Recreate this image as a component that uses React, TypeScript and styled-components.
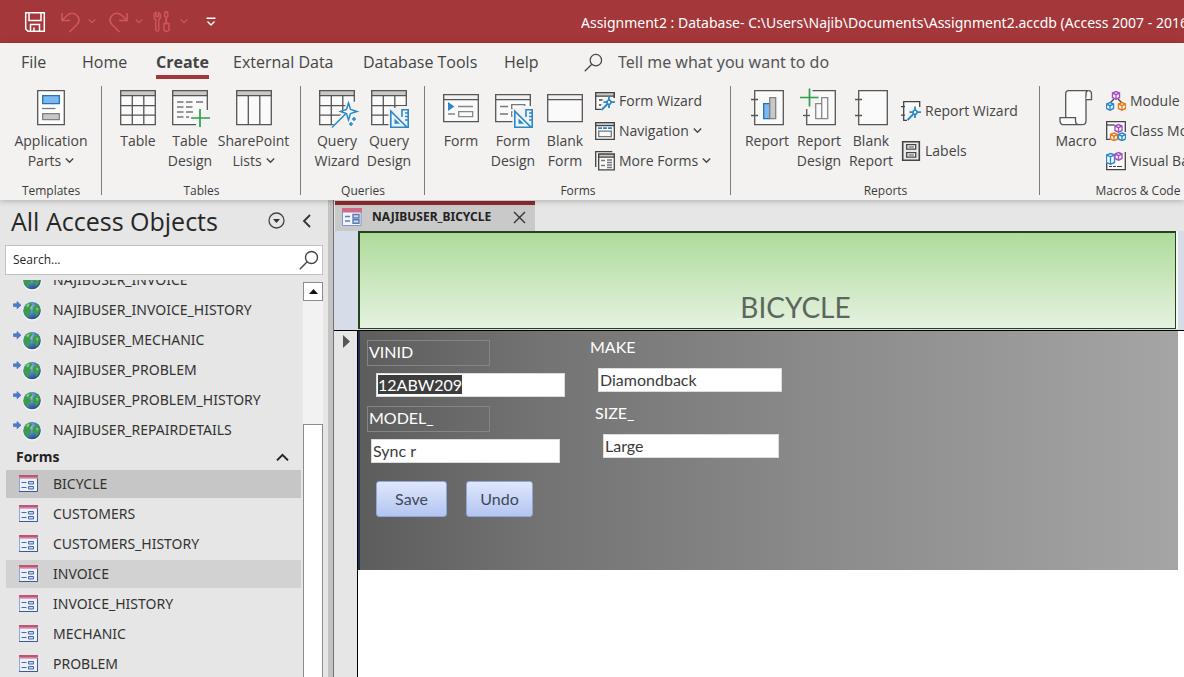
import React from 'react';
import styled, { createGlobalStyle } from 'styled-components';

const ui = '"Open Sans", "Noto Sans", sans-serif';
const wide = '"Noto Sans", "Open Sans", sans-serif';
const formFont = 'Lato, "Open Sans", sans-serif';
const ink = '#444';
const blue = '#2b88c8';
const green = '#2fa04a';
const purple = '#a64dc4';
const orange = '#e8791c';

const Global = createGlobalStyle`
  * { box-sizing: border-box; }
  body { margin: 0; overflow: hidden; font-family: ${ui}; color: ${ink}; background: #e6e6e6; }
  button { font: inherit; color: inherit; background: none; border: 0; padding: 0; }
  svg { display: block; flex: none; }
  ul { list-style: none; margin: 0; padding: 0; }
`;

const Shell = styled.div`
  height: 100vh;
  display: flex;
  flex-direction: column;
  overflow: hidden;
`;

/* Title bar */
const TitleBar = styled.header`
  height: 43px;
  flex: none;
  background: #a4373a;
  color: #fff;
  display: flex;
  align-items: center;
  justify-content: space-between;
  padding-left: 24px;
  overflow: hidden;
`;
const QuickAccess = styled.div`
  display: flex;
  align-items: center;
  flex: none;
`;
const QuickButton = styled.button<{ $dim?: boolean; $gap?: number }>`
  color: ${p => (p.$dim ? '#d0575b' : '#fff')};
  margin-right: ${p => p.$gap ?? 0}px;
`;
const Title = styled.div`
  flex: 0 0 603px;
  min-width: 0;
  overflow: hidden;
  padding-top: 2px;
  font: 14px/20px ${wide};
  white-space: nowrap;
`;

/* Ribbon */
const RibbonBox = styled.section`
  flex: none;
  background: #f3f2f1;
  box-shadow: 0 1px 6px rgba(0, 0, 0, 0.25);
  position: relative;
  z-index: 1;
`;
const Tabs = styled.nav`
  height: 43px;
  display: flex;
  align-items: flex-start;
  padding: 8px 0 0 21px;
`;
const Tab = styled.button<{ $active?: boolean; $w: number }>`
  width: ${p => p.$w}px;
  flex: none;
  text-align: left;
  font-size: 16px;
  line-height: 22px;
  white-space: nowrap;
  font-weight: ${p => (p.$active ? 700 : 400)};
  span {
    display: inline-block;
    padding-bottom: 2px;
    border-bottom: 4px solid ${p => (p.$active ? '#a4373a' : 'transparent')};
  }
`;
const Tell = styled.label`
  display: flex;
  align-items: center;
  gap: 15px;
  height: 22px;
  flex: 1;
  input {
    flex: 1;
    border: 0;
    padding: 0;
    background: none;
    font: 16px/22px ${wide};
    color: #555;
  }
  input::placeholder { color: #555; opacity: 1; }
`;
const Groups = styled.div`
  display: flex;
  height: 114px;
  padding-bottom: 5px;
  overflow: hidden;
`;
const Group = styled.section`
  flex: none;
  display: flex;
  flex-direction: column;
  justify-content: space-between;
  padding: 0 9px 0 10px;
  border-right: 1px solid #7c7c7c;
  &:last-child { border: 0; }
`;
const GroupTools = styled.div`
  display: flex;
`;
const GroupName = styled.div`
  text-align: center;
  font-size: 12px;
  line-height: 16px;
  height: 12px;
  color: #3b3b3b;
  white-space: nowrap;
`;
const BigButton = styled.button<{ $w?: number }>`
  width: ${p => p.$w ?? 52}px;
  display: flex;
  flex-direction: column;
  align-items: center;
  justify-content: flex-start;
  padding-top: 2px;
  font-size: 14px;
  line-height: 20px;
`;
const BigLabel = styled.span`
  margin-top: 3px;
  display: flex;
  flex-direction: column;
  align-items: center;
  white-space: nowrap;
`;
const Line = styled.span`
  display: flex;
  align-items: center;
  gap: 4px;
`;
const SmallTools = styled.div<{ $w: number; $spread?: boolean }>`
  width: ${p => p.$w}px;
  margin-left: 4px;
  padding-top: ${p => (p.$spread ? 10 : 0)}px;
  display: flex;
  flex-direction: column;
  gap: ${p => (p.$spread ? 10 : 0)}px;
`;
const SmallButton = styled.button`
  height: 30px;
  display: flex;
  align-items: center;
  gap: 4px;
  font-size: 14px;
  line-height: 20px;
  white-space: nowrap;
`;

/* Work area */
const Work = styled.div`
  flex: 1;
  min-height: 0;
  display: flex;
`;
const NavPane = styled.aside`
  flex: 0 0 334px;
  display: flex;
  flex-direction: column;
  background: #e6e6e6;
  border-right: 1px solid #707070;
  box-shadow: inset -5px 0 0 #c3c3c3;
  min-height: 0;
`;
const NavHead = styled.div`
  height: 45px;
  flex: none;
  display: flex;
  align-items: center;
  padding: 0 22px 4px 11px;
  gap: 17px;
  h1 {
    flex: 1;
    margin: 0;
    font-size: 25px;
    line-height: 34px;
    font-weight: 400;
    color: #262626;
    white-space: nowrap;
  }
`;
const SearchBox = styled.label`
  height: 30px;
  flex: none;
  margin: 0 10px 0 5px;
  padding: 0 3px 0 7px;
  display: flex;
  align-items: center;
  background: #fff;
  border: 1px solid #c0c0c0;
  input {
    flex: 1;
    min-width: 0;
    border: 0;
    padding: 0;
    font: 12px/20px ${ui};
  }
  input::placeholder { color: #262626; opacity: 1; }
`;
const NavBody = styled.div`
  flex: 1;
  min-height: 0;
  margin: 5px 10px 0 6px;
  display: flex;
  justify-content: space-between;
  gap: 2px;
`;
const NavScroll = styled.div`
  flex: 1;
  overflow: hidden;
  display: flex;
  flex-direction: column;
  justify-content: flex-start;
`;
const NavList = styled.ul<{ $scrolled?: boolean }>`
  flex: none;
  display: flex;
  flex-direction: column;
  gap: 2px;
  margin-top: ${p => (p.$scrolled ? -14 : 0)}px;
`;
const NavItem = styled.li<{ $bg?: string }>`
  height: 28px;
  background: ${p => p.$bg ?? 'transparent'};
  button {
    width: 100%;
    height: 100%;
    display: flex;
    align-items: center;
    padding-left: 6px;
    gap: 10px;
    font: 14px/20px ${wide};
    color: #333;
    white-space: nowrap;
  }
`;
const NavSection = styled.button`
  flex: none;
  height: 26px;
  display: flex;
  align-items: center;
  justify-content: space-between;
  padding: 0 12px 0 10px;
  font-size: 14px;
  line-height: 20px;
  font-weight: 700;
  color: #222;
`;
const ScrollBar = styled.div`
  width: 20px;
  margin-top: 2px;
  display: flex;
  flex-direction: column;
  background: #f2f2f2;
`;
const ScrollUp = styled.button`
  height: 19px;
  flex: none;
  display: flex;
  align-items: center;
  justify-content: center;
  background: #fff;
  border: 1px solid #8c8c8c;
`;
const ScrollThumb = styled.div`
  flex: 1;
  margin-top: 123px;
  background: #fff;
  border: 1px solid #8c8c8c;
  border-bottom: 0;
`;

const Doc = styled.main`
  flex: 1;
  min-width: 0;
  display: flex;
  flex-direction: column;
`;
const DocTabs = styled.div`
  flex: none;
  height: 31px;
  display: flex;
  padding: 1px 0 0 1px;
`;
const DocTab = styled.div`
  width: 200px;
  display: flex;
  align-items: center;
  padding: 0 9px 2px 7px;
  background: #c9c9c9;
  border-top: 4px solid #8e2a2f;
  b {
    flex: 1;
    margin-left: 10px;
    font: 700 12px/20px ${wide};
    color: #222;
    white-space: nowrap;
  }
`;
const HeaderRow = styled.div`
  flex: none;
  display: flex;
  height: 100px;
  background: #d6dde8;
  border-bottom: 1px solid #000;
  padding: 0 8px 1px 24px;
`;
const FormHeader = styled.div`
  flex: 1;
  display: flex;
  justify-content: center;
  align-items: flex-end;
  padding: 0 0 3px 56px;
  background: linear-gradient(#aedb9b, #e6f2e0);
  border: solid #26421f;
  border-width: 2px 1px 1px 2px;
  box-shadow: 2px 0 0 #f6f8f6;
  h2 {
    margin: 0;
    font: 400 28px/36px ${formFont};
    color: #5c665c;
  }
`;
const Detail = styled.div`
  flex: 1;
  min-height: 0;
  display: flex;
  background: #fff;
`;
const RecordSelector = styled.div`
  width: 24px;
  flex: none;
  padding: 4px 0 0 9px;
  background: #e6e6e6;
  border-right: 1px solid #000;
`;
const RecordForm = styled.form`
  flex: 1;
  height: 239px;
  margin-right: 6px;
  display: flex;
  align-items: flex-start;
  padding: 4px 0 0 7px;
  gap: 23px;
  border-left: 2px solid #1f2f50;
  background: linear-gradient(90deg, #5d5d5d, #737373 22%, #8a8a8a 55%, #a5a5a5);
`;
const FormColumn = styled.div<{ $raised?: boolean }>`
  display: flex;
  flex-direction: column;
  gap: 9px;
  margin-top: ${p => (p.$raised ? 0 : 5)}px;
`;
const Field = styled.div<{ $inset: number; $labelInset?: number; $w: number; $framed?: boolean }>`
  display: flex;
  flex-direction: column;
  gap: 7px;
  label {
    width: 123px;
    height: 26px;
    margin-left: ${p => p.$labelInset ?? 0}px;
    padding-left: 1px;
    border: 1px solid ${p => (p.$framed ? '#858585' : 'transparent')};
    font: 16px/22px ${formFont};
    color: #fff;
  }
  input {
    width: ${p => p.$w}px;
    height: 24px;
    margin-left: ${p => p.$inset}px;
    padding: 0 1px 2px;
    border: 1px solid #ddd;
    border-radius: 0;
    outline: 0;
    background: #fff;
    font: 16px/20px ${formFont};
    color: #3b3b3b;
  }
  input::selection { background: #3d3d3d; color: #fff; }
`;
const Actions = styled.div`
  display: flex;
  gap: 19px;
  padding: 9px 0 0 9px;
`;
const Action = styled.button<{ $w: number }>`
  width: ${p => p.$w}px;
  height: 36px;
  border: 1px solid #8ea6d8;
  border-radius: 3px;
  background: linear-gradient(#dfe7fb, #b3c5f2);
  font: 16px/20px ${formFont};
  color: #404858;
`;

/* Icons */
const Chevron = ({ up = false, s = 9 }: { up?: boolean; s?: number }) => (
  <svg width={s} height={s} viewBox="0 0 9 9" fill="none" stroke="currentColor" strokeWidth="1.4">
    <path d={up ? 'M.7 6.5 4.5 2.7 8.3 6.5' : 'M.8 1.6 4.5 5.2 8.2 1.6'} />
  </svg>
);

const Magnifier = ({ size = 20, flip = false }: { size?: number; flip?: boolean }) => (
  <svg width={size} height={size} viewBox="0 0 20 20" fill="none" stroke="#444" strokeWidth={flip ? 1.4 : 1.3}>
    <circle cx="12.5" cy="7.5" r="6" />
    <path d="M8.2 11.8.8 19.2" />
  </svg>
);

const Svg36 = ({ children }: { children: React.ReactNode }) => (
  <svg width="36" height="40" viewBox="0 0 36 40" fill="none" stroke="#555" strokeWidth="1.3" overflow="visible">{children}</svg>
);

const Grid = () => (
  <>
    <path d="M.7 2.7h34.6v34H.7z" fill="#fafafa" />
    <path d="M.7 2.7h34.6v5H.7z" fill="#c8c8c8" />
    <path d="M.7 17.7h34.6M.7 27.2h34.6M12.3 7.7v29M23.8 7.7v29" />
  </>
);
const SetSquare = ({ y = 0 }: { y?: number }) => (
  <g transform={`translate(19 ${y})`}>
    <path d="M-1.5-1h9v-2h12v25h-21z" fill="#f3f2f1" stroke="none" />
    <path d="M12 8V.8h6.200v17.500H12" fill="#eef6fc" stroke={blue} strokeWidth="1.600" />
    <path d="M.8 2.200v16.100H17L.8 2.200z" fill="#eef6fc" stroke={blue} strokeWidth="1.600" />
    <path d="M15 4h3M15 7.500h3M15 11h3" stroke={blue} />
    <path d="M4.500 9.500v5.200H10z" fill={blue} stroke="none" />
  </g>
);
const FormWindow = () => (
  <>
    <path d="M.7 6.7h34.6v27H.7z" fill="#fafafa" />
    <path d="M.7 6.7h34.6v5H.7z" fill="#f1f1f1" />
  </>
);

const icons = {
  parts: (
    <Svg36>
      <path d="M4.700 2.700h26.600v34H4.700z" fill="#fff" />
      <path d="M9.700 7.700h16.600v8H9.700z" fill="#7db8ee" stroke="#1e74bd" />
      <path d="M9 20.500h13.500" stroke="#777" />
      <path d="M9.700 25.700h16.600v6H9.700z" fill="#c8c8c8" stroke="#808080" />
    </Svg36>
  ),
  table: <Svg36><Grid /></Svg36>,
  tableDesign: (
    <Svg36>
      <path d="M.7 2.700h34.600v34H.7z" fill="#fafafa" />
      <path d="M.7 2.700h34.600v5H.7z" fill="#c8c8c8" />
      <path d="M5 14h6.500M14 14h6.500M24 14h7M5 19h6.500M14 19h6.500M5 24h6.500M14 24h7M5 29h6.500M14 29h3" stroke="#777" />
      <path d="M26 22h11v18H24v-7h-4v-6h6z" fill="#f3f2f1" stroke="none" />
      <path d="M28 21v18M19 30h19" stroke={green} strokeWidth="1.700" />
    </Svg36>
  ),
  lists: (
    <Svg36>
      <path d="M.7 2.700h34.600v34H.7z" fill="#fafafa" />
      <path d="M.7 2.700h34.600v5H.7z" fill="#c8c8c8" />
      <path d="M12.300 7.700v29M23.800 7.700v29" />
    </Svg36>
  ),
  queryWizard: (
    <Svg36>
      <Grid />
      <path d="M38 13v27H12l11-15 4-9z" fill="#f3f2f1" stroke="none" />
      <path d="m29.500 15 2 6.500 6.500 2-6.500 2-2 6.500-2-6.500-6-2 6-2z" fill="#f8fcff" stroke={blue} strokeWidth="1.500" />
      <path d="M26.500 26 13 39.500M35 29v4M33 31h4M32 34v4M30 36h4" stroke={blue} strokeWidth="1.500" />
    </Svg36>
  ),
  queryDesign: <Svg36><Grid /><SetSquare y={21} /></Svg36>,
  form: (
    <Svg36>
      <FormWindow />
      <path d="M5 14v9l6.500-4.500z" fill={blue} stroke="none" />
      <path d="M15 18.500h15M5 26h7" stroke="#888" />
      <path d="M15.700 23.700h14v5h-14z" stroke="#888" />
    </Svg36>
  ),
  formDesign: (
    <Svg36>
      <FormWindow />
      <path d="M5 18.500h8M5 26h8" stroke="#777" />
      <path d="M16.700 16.700h13v4h-13zM16.700 24h5v4h-5z" stroke="#777" />
      <SetSquare y={21} />
    </Svg36>
  ),
  blankForm: <Svg36><FormWindow /></Svg36>,
  report: (
    <Svg36>
      <path d="M5.700 2.700h28.600v34H5.700z" fill="#fafafa" />
      <path d="M2 11.500h7M2 27.500h7" />
      <path d="M14.700 15.700h6v15h-6z" fill="#7db8ee" stroke="#1e74bd" />
      <path d="M20.700 9.700h6v21h-6z" fill="#c8c8c8" stroke="#808080" />
    </Svg36>
  ),
  reportDesign: (
    <Svg36>
      <path d="M5.700 2.700h28.600v34H5.700z" fill="#fafafa" />
      <path d="M2 27.500h7" />
      <path d="M14.700 15.700h6v15h-6zM20.700 9.700h6v21h-6z" stroke="#888" />
      <path d="M-1 0h12.500v7H18v6h-4v8H-1z" fill="#f3f2f1" stroke="none" />
      <path d="M8.500.500v18M-1 9.500h18.500" stroke={green} strokeWidth="1.700" />
    </Svg36>
  ),
  blankReport: (
    <Svg36>
      <path d="M5.700 2.700h28.600v34H5.700z" fill="#fafafa" />
      <path d="M2 11.500h7M2 27.500h7" />
    </Svg36>
  ),
  macro: (
    <Svg36>
      <path d="M7.700 29V5.500q0-2.800 3-2.800h20q-2.700 0-2.700 3v27q0 4-4 4H6q-4 0-4-4v-3h15.500v3q0 4 4 4" fill="#fafafa" />
      <path d="M28 11.700h5.500V6q0-3.300-3-3.300" fill="#fafafa" />
    </Svg36>
  ),
};

const Svg20 = ({ children }: { children: React.ReactNode }) => (
  <svg width="20" height="20" viewBox="0 0 20 20" fill="none" stroke="#444" strokeWidth="1.3">{children}</svg>
);
const MiniWand = () => (
  <>
    <path d="M8 7h12v13H6v-5z" fill="#f3f2f1" stroke="none" />
    <path d="M14 5.500v4M14 13v4M8.500 11.200h4M15.500 11.200h4.500M13 12.500 6.500 19" stroke={blue} strokeWidth="1.800" />
    <circle cx="14" cy="11.200" r="2" fill="#fff" stroke={blue} strokeWidth="1.600" />
  </>
);
const Cube = ({ x, y, c }: { x: number; y: number; c: string }) => (
  <g transform={`translate(${x} ${y})`} stroke={c} strokeWidth="1.400">
    <path d="M4 .500 7.500 2v4.500L4 8.200.500 6.500V2z" fill="#fff" />
    <path d="M.5 2 4 3.700 7.500 2M4 3.700v4.500" />
  </g>
);
const small = {
  formWizard: (
    <Svg20>
      <path d="M.7 1.700h18.600v16.600H.7z" fill="#fafafa" />
      <path d="M.7 1.700h18.600v3.500H.7z" fill="#c8c8c8" />
      <path d="M4 9h4M4 14h3" />
      <MiniWand />
      <path d="M19.300 1.700v5" />
    </Svg20>
  ),
  navigation: (
    <Svg20>
      <path d="M.7 1.700h18.600v16.600H.7z" fill="#fafafa" />
      <path d="M.7 1.700h18.600v3H.7z" fill="#c8c8c8" />
      <path d="M3 7.200h14" stroke={blue} strokeDasharray="4 1" strokeWidth="1.800" />
      <path d="M3.700 10.200h12.600v5.500H3.700z" stroke="#777" />
    </Svg20>
  ),
  moreForms: (
    <Svg20>
      <path d="M.7 16V.7h16.600" />
      <path d="M3.700 3.200h15.600v15.600H3.700z" fill="#fafafa" />
      <path d="M3.700 3.200h15.600v3H3.700z" fill="#c8c8c8" />
      <path d="M6 9.500h4M6 14.500h4M12 9h5M12 11.500h5M12 14h5M12 16.500h5" stroke="#777" />
    </Svg20>
  ),
  reportWizard: (
    <Svg20>
      <path d="M18.700 6V.7H2.700v18.600h5" fill="#fafafa" />
      <path d="M0 5.700h4M0 14.200h4" />
      <MiniWand />
    </Svg20>
  ),
  labels: (
    <Svg20>
      <path d="M1.700.7h16.600v18.600H1.700z" fill="#e9e9e9" strokeWidth="1.600" />
      <path d="M5.700 3.700h9v4.500h-9zM5.700 11.700h9v4.500h-9z" fill="#fafafa" />
      <path d="M7.500 6h5.500M7.500 14h5.500" strokeWidth="1" />
    </Svg20>
  ),
  module: (
    <Svg20>
      <path d="M8 8 4 12M12 8l4 4" />
      <Cube x={6} y={0} c={purple} />
      <Cube x={0} y={11} c={blue} />
      <Cube x={12} y={11} c={orange} />
    </Svg20>
  ),
  classModule: (
    <Svg20>
      <path d="M.7.7h18.600v17.600H.7z" fill="#fafafa" />
      <path d="M.7 4h8" />
      <path d="M4 11h16v9H4z" fill="#f3f2f1" stroke="none" />
      <Cube x={8.5} y={3} c={purple} />
      <Cube x={4} y={11.5} c={orange} />
      <Cube x={12} y={11.5} c={blue} />
    </Svg20>
  ),
  visualBasic: (
    <Svg20>
      <path d="M.7 12v6.700h18.600V1" fill="#fafafa" />
      <path d="M3 15.500h3M7 15.500h3M11 15.500h5" strokeWidth="1" />
      <path d="M4.500 2.500 8.500 4v7.500l-4 1.800-4-1.800V4zM.500 4l4 1.800 4-1.800M4.500 5.800v7" stroke={blue} fill="#fff" strokeWidth="1.400" />
      <Cube x={8.5} y={1} c={purple} />
    </Svg20>
  ),
};

const Globe = () => (
  <svg width="31" height="26" viewBox="0 0 31 26">
    <defs>
      <radialGradient id="sea" cx=".35" cy=".3" r=".8">
        <stop offset="0" stopColor="#a9cdf0" />
        <stop offset=".5" stopColor="#4a80c2" />
        <stop offset="1" stopColor="#1d427c" />
      </radialGradient>
    </defs>
    <path d="M1.500 6.800H5V4.500l4 3.700-4 3.600V9.600H1.500z" fill="#4b7ad6" stroke="#3f62b0" strokeWidth=".6" />
    <circle cx="20" cy="14.200" r="9.600" fill="#f6f8f6" />
    <circle cx="20" cy="13.500" r="8.800" fill="url(#sea)" />
    <path d="M12.500 10q2-4 6-4.500l2 2-2.500 3.500 1.500 3-2 2.500-1 4q-4-2-5-6zM23 6q4 1.500 5 5.500l-1 5-3 3.500-1.500-4.500-2-1 .5-4.500 3-1.500z" fill="#3f9a4c" />
    <path d="M14 9q2-3 4-2.500l-2 4zM24 10.500l2.500 1-1.500 3z" fill="#8ad07c" />
  </svg>
);

const FormGlyph = () => (
  <svg width="31" height="20" viewBox="0 0 31 20">
    <path d="M7.500 2h18v15.500h-18z" fill="#eaf1fd" stroke="#8fa6d0" />
    <path d="M7 1h19v3.500H7z" fill="#bd5577" />
    <path d="M7 3.500h19v1H7z" fill="#e3b0c2" />
    <path d="M25.500 4.500V17.500H7" fill="none" stroke="#3f5a90" />
    <path d="M9.500 8.500h5M9.500 13.500h5" stroke="#4c69a3" />
    <path d="M16.500 7.500h5v2.500h-5zM16.500 12.500h5v2.500h-5z" fill="#c9d8f4" stroke="#4c69a3" />
  </svg>
);

const tables = ['NAJIBUSER_INVOICE', 'NAJIBUSER_INVOICE_HISTORY', 'NAJIBUSER_MECHANIC', 'NAJIBUSER_PROBLEM', 'NAJIBUSER_PROBLEM_HISTORY', 'NAJIBUSER_REPAIRDETAILS'];
const forms: { name: string; bg?: string }[] = [
  { name: 'BICYCLE', bg: '#c6c6c6' },
  { name: 'CUSTOMERS' },
  { name: 'CUSTOMERS_HISTORY' },
  { name: 'INVOICE', bg: '#d2d2d2' },
  { name: 'INVOICE_HISTORY' },
  { name: 'MECHANIC' },
  { name: 'PROBLEM' },
];

const tabs: [string, number][] = [['File', 61], ['Home', 74], ['Create', 77], ['External Data', 130], ['Database Tools', 141], ['Help', 80]];

const Big = ({ icon, lines, menu, w }: { icon: React.ReactNode; lines: string[]; menu?: boolean; w?: number }) => (
  <BigButton type="button" $w={w}>
    {icon}
    <BigLabel>
      {lines.map((l, i) => (
        <Line key={l}>{l}{menu && i === lines.length - 1 && <Chevron />}</Line>
      ))}
    </BigLabel>
  </BigButton>
);
const Small = ({ icon, text, menu }: { icon: React.ReactNode; text: string; menu?: boolean }) => (
  <SmallButton type="button">{icon}{text}{menu && <Chevron />}</SmallButton>
);
const ToolGroup = ({ name, children }: { name: string; children: React.ReactNode }) => (
  <Group>
    <GroupTools>{children}</GroupTools>
    <GroupName>{name}</GroupName>
  </Group>
);

export default function App() {
  const vin = React.useRef<HTMLInputElement>(null);
  React.useEffect(() => {
    vin.current?.focus();
    vin.current?.select();
  }, []);

  return (
    <Shell>
      <Global />
      <TitleBar>
        <QuickAccess>
          <QuickButton aria-label="Save" $gap={15}>
            <svg width="22" height="22" viewBox="0 0 22 22" fill="none" stroke="currentColor" strokeWidth="1.5">
              <path d="M1.700 1.700h18.600v18.600H4l-2.300-2.300zM5 2v7.500h12V2M6.500 20v-6.500h9V20M10 20v-3.500" />
            </svg>
          </QuickButton>
          <QuickButton aria-label="Undo" $dim $gap={7}>
            <svg width="20" height="22" viewBox="0 0 20 22" fill="none" stroke="currentColor" strokeWidth="1.6">
              <path d="M1 2v7.500h8M1.500 9 6 4.500q5.500-4.500 10 0 4 4.500 0 9L8.500 21" />
            </svg>
          </QuickButton>
          <QuickButton aria-label="Undo options" $dim $gap={12}><Chevron s={8} /></QuickButton>
          <QuickButton aria-label="Redo" $dim $gap={7}>
            <svg width="20" height="22" viewBox="0 0 20 22" fill="none" stroke="currentColor" strokeWidth="1.6">
              <path d="M19 2v7.500h-8M18.500 9 14 4.500q-5.500-4.500-10 0-4 4.500 0 9L11.500 21" />
            </svg>
          </QuickButton>
          <QuickButton aria-label="Redo options" $dim $gap={10}><Chevron s={8} /></QuickButton>
          <QuickButton aria-label="Tools" $dim $gap={10}>
            <svg width="17" height="22" viewBox="0 0 17 22" fill="none" stroke="currentColor" strokeWidth="1.4">
              <path d="M3 1.500v4h2.500v-4Q8 3 7.500 6 7 8 5.800 8.500V19q-1.500 2.500-3 0V8.500Q.800 7.500.800 5.500.800 2.500 3 1.500zM13 12V6.500l-1.500-1.500.5-4h2.500l.5 4-1.500 1.500V12M11 12.500h5V19q-2.500 3-5 0z" />
            </svg>
          </QuickButton>
          <QuickButton aria-label="Tools options" $dim $gap={18}><Chevron s={8} /></QuickButton>
          <QuickButton aria-label="Customize toolbar">
            <svg width="10" height="10" viewBox="0 0 10 10" fill="none" stroke="currentColor" strokeWidth="1.4">
              <path d="M.5 1.200h9M1.500 4.500 5 8l3.500-3.500" />
            </svg>
          </QuickButton>
        </QuickAccess>
        <Title>Assignment2 : Database- C:\Users\Najib\Documents\Assignment2.accdb (Access 2007 - 2016 file format)</Title>
      </TitleBar>

      <RibbonBox>
        <Tabs>
          {tabs.map(([t, w]) => (
            <Tab key={t} type="button" $w={w} $active={t === 'Create'}><span>{t}</span></Tab>
          ))}
          <Tell>
            <Magnifier size={19} />
            <input aria-label="Tell me" placeholder="Tell me what you want to do" />
          </Tell>
        </Tabs>
        <Groups>
          <ToolGroup name="Templates">
            <Big icon={icons.parts} lines={['Application', 'Parts']} menu w={82} />
          </ToolGroup>
          <ToolGroup name="Tables">
            <Big icon={icons.table} lines={['Table']} />
            <Big icon={icons.tableDesign} lines={['Table', 'Design']} />
            <Big icon={icons.lists} lines={['SharePoint', 'Lists']} menu w={75} />
          </ToolGroup>
          <ToolGroup name="Queries">
            <Big icon={icons.queryWizard} lines={['Query', 'Wizard']} />
            <Big icon={icons.queryDesign} lines={['Query', 'Design']} />
          </ToolGroup>
          <ToolGroup name="Forms">
            <Big icon={icons.form} lines={['Form']} />
            <Big icon={icons.formDesign} lines={['Form', 'Design']} />
            <Big icon={icons.blankForm} lines={['Blank', 'Form']} />
            <SmallTools $w={126}>
              <Small icon={small.formWizard} text="Form Wizard" />
              <Small icon={small.navigation} text="Navigation" menu />
              <Small icon={small.moreForms} text="More Forms" menu />
            </SmallTools>
          </ToolGroup>
          <ToolGroup name="Reports">
            <Big icon={icons.report} lines={['Report']} />
            <Big icon={icons.reportDesign} lines={['Report', 'Design']} />
            <Big icon={icons.blankReport} lines={['Blank', 'Report']} />
            <SmallTools $w={129} $spread>
              <Small icon={small.reportWizard} text="Report Wizard" />
              <Small icon={small.labels} text="Labels" />
            </SmallTools>
          </ToolGroup>
          <ToolGroup name="Macros & Code">
            <Big icon={icons.macro} lines={['Macro']} />
            <SmallTools $w={120}>
              <Small icon={small.module} text="Module" />
              <Small icon={small.classModule} text="Class Module" />
              <Small icon={small.visualBasic} text="Visual Basic" />
            </SmallTools>
          </ToolGroup>
        </Groups>
      </RibbonBox>

      <Work>
        <NavPane>
          <NavHead>
            <h1>All Access Objects</h1>
            <button type="button" aria-label="Object list options">
              <svg width="17" height="17" viewBox="0 0 17 17" fill="none" stroke="#444" strokeWidth="1.3">
                <circle cx="8.5" cy="8.5" r="7.5" />
                <path d="M5 7h7l-3.500 4z" fill="#333" stroke="none" />
              </svg>
            </button>
            <button type="button" aria-label="Collapse pane">
              <svg width="9" height="14" viewBox="0 0 9 14" fill="none" stroke="#333" strokeWidth="1.8">
                <path d="M8 1 2 7l6 6" />
              </svg>
            </button>
          </NavHead>
          <SearchBox>
            <input aria-label="Search objects" placeholder="Search..." />
            <Magnifier flip />
          </SearchBox>
          <NavBody>
            <NavScroll>
              <NavList $scrolled>
                {tables.map(t => (
                  <NavItem key={t}><button type="button"><Globe />{t}</button></NavItem>
                ))}
              </NavList>
              <NavSection type="button">Forms<Chevron up s={13} /></NavSection>
              <NavList>
                {forms.map(f => (
                  <NavItem key={f.name} $bg={f.bg}><button type="button"><FormGlyph />{f.name}</button></NavItem>
                ))}
              </NavList>
            </NavScroll>
            <ScrollBar>
              <ScrollUp type="button" aria-label="Scroll up">
                <svg width="9" height="5" viewBox="0 0 9 5"><path d="M0 5 4.500 0 9 5z" fill="#111" /></svg>
              </ScrollUp>
              <ScrollThumb />
            </ScrollBar>
          </NavBody>
        </NavPane>

        <Doc>
          <DocTabs>
            <DocTab>
              <svg width="20" height="20" viewBox="0 0 20 20">
                <path d="M.5 1.500h18.500v17H.5z" fill="#f1f5fd" stroke="#7f97c6" />
                <path d="M0 1h20v4.500H0z" fill="#d0698a" />
                <path d="M3 9.500h5M3 14h5" stroke="#5f7bb0" strokeWidth="1.400" />
                <path d="M11 7.500h6v3.500h-6zM11 12.700h6v3.500h-6z" fill="#c9d8f4" stroke="#5f7bb0" strokeWidth="1.400" />
              </svg>
              <b>NAJIBUSER_BICYCLE</b>
              <button type="button" aria-label="Close tab">
                <svg width="13" height="13" viewBox="0 0 13 13" stroke="#333" strokeWidth="1.4"><path d="m1 1 11 11M12 1 1 12" /></svg>
              </button>
            </DocTab>
          </DocTabs>
          <HeaderRow>
            <FormHeader><h2>BICYCLE</h2></FormHeader>
          </HeaderRow>
          <Detail>
            <RecordSelector>
              <svg width="8" height="13" viewBox="0 0 8 13"><path d="M0 0v13l7-6.500z" fill="#555" /></svg>
            </RecordSelector>
            <RecordForm onSubmit={e => e.preventDefault()}>
              <FormColumn>
                <Field $inset={9} $w={189} $framed>
                  <label htmlFor="vin">VINID</label>
                  <input id="vin" ref={vin} defaultValue="12ABW209" />
                </Field>
                <Field $inset={4} $w={189} $framed>
                  <label htmlFor="model">MODEL_</label>
                  <input id="model" defaultValue="Sync r" />
                </Field>
                <Actions>
                  <Action type="submit" $w={71}>Save</Action>
                  <Action type="reset" $w={67}>Undo</Action>
                </Actions>
              </FormColumn>
              <FormColumn $raised>
                <Field $inset={10} $w={184}>
                  <label htmlFor="make">MAKE</label>
                  <input id="make" defaultValue="Diamondback" />
                </Field>
                <Field $inset={15} $labelInset={5} $w={176}>
                  <label htmlFor="size">SIZE_</label>
                  <input id="size" defaultValue="Large" />
                </Field>
              </FormColumn>
            </RecordForm>
          </Detail>
        </Doc>
      </Work>
    </Shell>
  );
}
